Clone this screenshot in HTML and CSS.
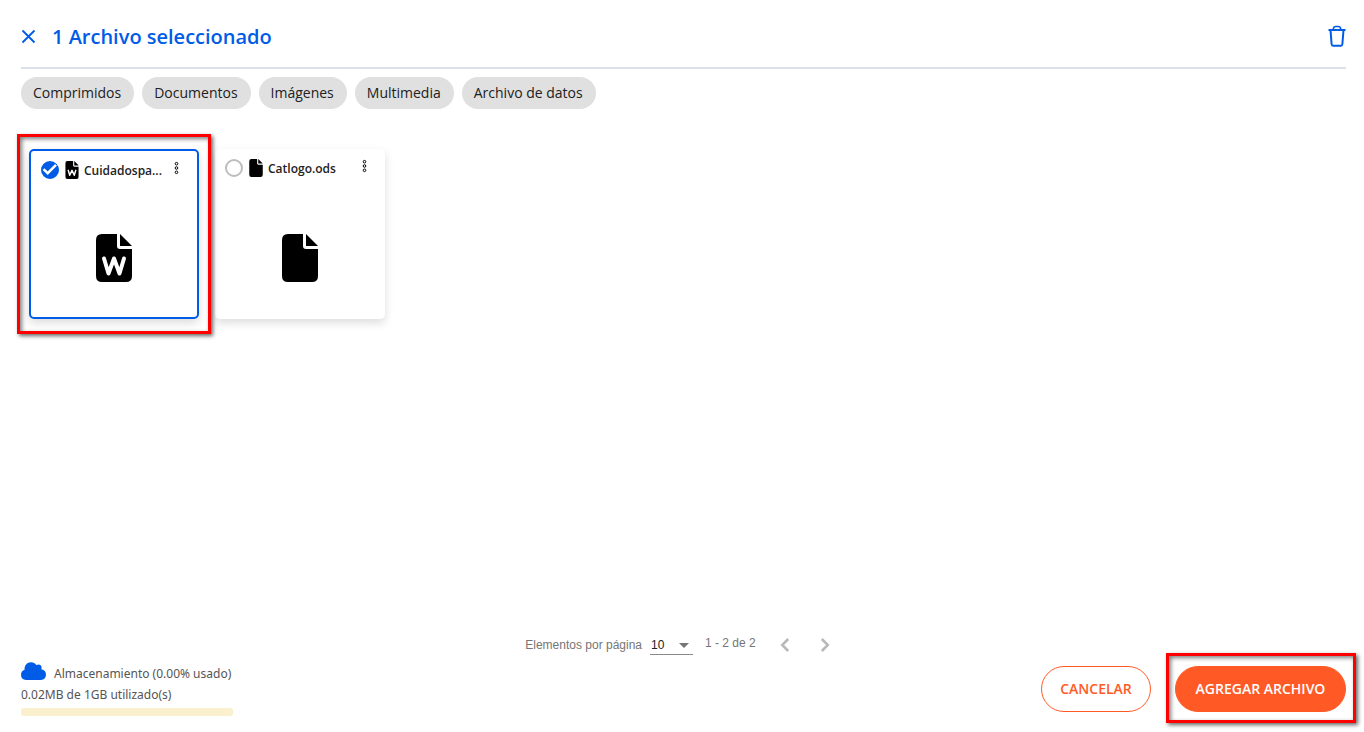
FILE: index.html
```html
<!DOCTYPE html>
<html lang="es">
<head>
<meta charset="utf-8">
<meta name="viewport" content="width=device-width, initial-scale=1">
<title>Archivos</title>
<link rel="stylesheet" href="styles.css">
</head>
<body>
<svg class="defs" width="0" height="0" aria-hidden="true">
  <symbol id="file" viewBox="0 0 36 48">
    <path d="M6 0H21V12Q21 15 24 15H36V42Q36 48 30 48H6Q0 48 0 42V6Q0 0 6 0Z"/>
    <path d="M24 0L36 12H24Z"/>
  </symbol>
  <symbol id="dots" viewBox="0 0 5 14">
    <g fill="none" stroke="currentColor"><circle cx="2.5" cy="2.7" r="1.3"/><circle cx="2.5" cy="7" r="1.3"/><circle cx="2.5" cy="11.3" r="1.3"/></g>
  </symbol>
</svg>
<main class="dialog">
  <header class="header">
    <button class="icon-button" aria-label="Cerrar"><svg width="15" height="15" viewBox="0 0 15 15"><path d="M1.5 1.5L13.5 13.5M13.5 1.5L1.5 13.5" fill="none" stroke="currentColor" stroke-width="1.8"/></svg></button>
    <h1 class="title">1 Archivo seleccionado</h1>
    <button class="icon-button" aria-label="Eliminar"><svg width="18" height="22" viewBox="0 0 18 22"><g fill="none" stroke="currentColor" stroke-width="2"><path d="M.5 5H17.5"/><path d="M5.2 4.5Q5.5 1.5 7.5 1.5H10.5Q12.5 1.5 12.8 4.5" stroke-width="1.6"/><path d="M2.5 5L3.6 19Q3.8 20.8 5 20.8H13Q14.2 20.8 14.4 19L15.5 5"/></g></svg></button>
  </header>
  <nav class="chips" aria-label="Tipos de archivo">
    <button class="chip">Comprimidos</button>
    <button class="chip">Documentos</button>
    <button class="chip">Imágenes</button>
    <button class="chip">Multimedia</button>
    <button class="chip">Archivo de datos</button>
  </nav>
  <section class="files" aria-label="Archivos">
    <article class="card card-selected">
      <div class="card-head">
        <input class="check" type="checkbox" id="file-1" checked>
        <svg class="check-mark" width="18" height="18" viewBox="0 0 18 18"><path d="M2.5 8.2L6.7 12.2L15 3.8" fill="none" stroke="#fff" stroke-width="2.5"/></svg>
        <svg class="file-small" width="14" height="18" viewBox="0 0 36 48"><use href="#file" width="36" height="48"/><path class="w" d="M8 25L12 38L18 25L24 38L28 25"/></svg>
        <label class="file-name" for="file-1">Cuidadospa...</label>
        <button class="menu" aria-label="Opciones"><svg width="5" height="14"><use href="#dots"/></svg></button>
      </div>
      <div class="preview"><svg width="36" height="48" viewBox="0 0 36 48"><use href="#file" width="36" height="48"/><path class="w" d="M8 24.5L12.5 39.5L18 24.5L23.5 39.5L28 24.5"/></svg></div>
    </article>
    <article class="card">
      <div class="card-head">
        <input class="check" type="checkbox" id="file-2">
        <svg class="file-small" width="14" height="18"><use href="#file"/></svg>
        <label class="file-name" for="file-2">Catlogo.ods</label>
        <button class="menu" aria-label="Opciones"><svg width="5" height="14"><use href="#dots"/></svg></button>
      </div>
      <div class="preview"><svg width="36" height="48"><use href="#file"/></svg></div>
    </article>
    <span class="highlight highlight-card"></span>
  </section>
  <div class="paginator">
    <label for="page-size">Elementos por página</label>
    <span class="select-wrap">
      <select id="page-size"><option>10</option><option>25</option></select>
      <svg class="arrow" width="10" height="5" viewBox="0 0 10 5"><path d="M0 0H10L5 5Z"/></svg>
    </span>
    <span class="range">1 - 2 de 2</span>
    <button class="page-button" aria-label="Anterior"><svg width="10" height="14" viewBox="0 0 10 14"><path d="M8.2 1L2.2 7L8.2 13" fill="none" stroke="currentColor" stroke-width="2.5"/></svg></button>
    <button class="page-button" aria-label="Siguiente"><svg width="10" height="14" viewBox="0 0 10 14"><path d="M1.8 1L7.8 7L1.8 13" fill="none" stroke="currentColor" stroke-width="2.5"/></svg></button>
  </div>
  <footer class="footer">
    <div class="storage">
      <div class="storage-title"><svg width="25" height="18" viewBox="0 0 25 18"><path d="M5 18Q0 17.6 0 12.7Q.1 9 3.6 7.8C3.2 3.5 6 .2 10 .2Q13.6.2 15.4 3.1Q17.5 2 19.4 3.1Q21.3 4.5 20.4 7.3Q25 8.3 25 12.7Q24.7 17.6 20 18Z"/></svg><span>Almacenamiento (0.00% usado)</span></div>
      <div class="storage-used">0.02MB de 1GB utilizado(s)</div>
      <div class="bar"></div>
    </div>
    <div class="actions">
      <button class="button">CANCELAR</button>
      <div class="primary-wrap"><button class="button button-primary">AGREGAR ARCHIVO</button><span class="highlight highlight-button"></span></div>
    </div>
  </footer>
</main>
</body>
</html>
```
FILE: styles.css
```css
* { box-sizing: border-box; }
body { margin: 0; background: #fff; font-family: "Open Sans", sans-serif; color: #222; }
button { font: inherit; padding: 0; border: 0; background: none; cursor: pointer; }
svg { display: block; flex: none; }
.defs { position: absolute; }
.dialog { min-height: 100vh; display: flex; flex-direction: column; padding: 5px 18px 20px 21px; }
.header { display: flex; align-items: center; gap: 16px; height: 64px; border-bottom: 2px solid #dce0ea; color: #005ce6; }
.icon-button { color: #005ce6; }
.title { flex: 1; margin: 0; padding-top: 2px; font-size: 20px; line-height: 28px; font-weight: 600; }
.chips { display: flex; gap: 8px; padding-top: 8px; }
.chip { height: 32px; padding: 0 13px 0 12px; border-radius: 16px; background: #e0e0e0; font-size: 14px; line-height: 20px; font-weight: 500; color: #212121; }
.files { position: relative; flex: 1; display: flex; align-items: flex-start; gap: 16px; padding: 40px 8px 16px; }
.card { width: 170px; height: 170px; padding: 8px 10px; border-radius: 5px; background: #fff; box-shadow: 0 4px 10px rgba(0, 0, 0, .14); }
.card-selected { border: 2px solid #005ce6; }
.card-head { position: relative; display: flex; align-items: center; height: 22px; }
.check { appearance: none; flex: none; width: 18px; height: 18px; margin: 0 6px 0 0; border: 2px solid #bdbdbd; border-radius: 50%; }
.check:checked { background: #005ce6; border-color: #005ce6; }
.check-mark { position: absolute; left: 0; top: 2px; pointer-events: none; }
.w { fill: none; stroke: #fff; stroke-width: 4; stroke-linecap: round; stroke-linejoin: round; }
.file-name { flex: 1; margin-left: 5px; padding-top: 2px; font-size: 12px; line-height: 18px; font-weight: 600; white-space: nowrap; }
.menu { width: 21px; height: 18px; display: flex; justify-content: center; align-items: center; align-self: flex-start; }
.preview { display: flex; justify-content: center; padding-top: 55px; }
.card-selected .preview { padding-top: 53px; }
.highlight { position: absolute; border: 3px solid #f00; box-shadow: 2px 2px 4px rgba(0, 0, 0, .6), inset 2px 2px 4px rgba(0, 0, 0, .5); pointer-events: none; }
.highlight-card { left: -4px; top: 25px; width: 194px; height: 200px; }
.highlight-button { inset: -13px -10px -11px -9px; }
.paginator { display: flex; align-items: center; justify-content: center; height: 22px; padding-left: 3px; font-family: "Liberation Sans", sans-serif; font-size: 12px; line-height: 16px; color: #757575; }
.select-wrap { position: relative; margin: 0 12px 0 8px; }
.select-wrap select { appearance: none; display: block; width: 43px; height: 20px; padding: 0 0 0 1px; border: 0; border-bottom: 1px solid #8a8a8a; border-radius: 0; background: none; font: inherit; color: #212121; }
.arrow { position: absolute; right: 4px; top: 8px; fill: #757575; pointer-events: none; }
.range { padding-bottom: 4px; margin-right: 9px; }
.page-button { width: 40px; height: 24px; display: flex; align-items: center; justify-content: center; color: #b8b8b8; }
.footer { display: flex; justify-content: space-between; align-items: flex-end; height: 56px; }
.storage { min-width: 212px; font-family: "Noto Sans", sans-serif; font-size: 12px; line-height: 20px; color: #555; }
.storage-title { display: flex; align-items: flex-start; gap: 8px; fill: #005ce6; }
.storage-title svg { margin-top: -2px; }
.storage-used { padding-top: 1px; }
.bar { height: 8px; margin-top: 3px; margin-bottom: -4px; border-radius: 3px; background: #faf0cd; }
.actions { display: flex; gap: 24px; }
.primary-wrap { position: relative; }
.button { min-width: 110px; height: 46px; padding: 0 18px; border: 1px solid #ff5a26; border-radius: 23px; color: #ff5a26; font-size: 14px; line-height: 20px; font-weight: 600; }
.button-primary { min-width: 171px; background: #ff5a26; color: #fff; }
```
